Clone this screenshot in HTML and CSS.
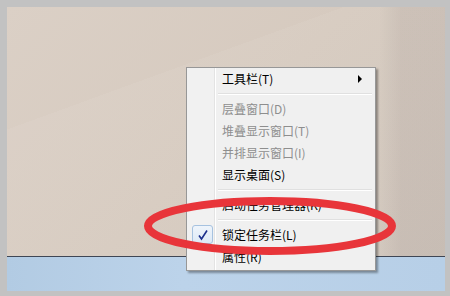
FILE: index.html
```html
<!DOCTYPE html>
<html lang="zh-CN">
<head>
    <meta charset="UTF-8">
    <title>任务栏菜单</title>
    <link rel="stylesheet" href="styles.css">
</head>
<body>
    <div class="frame">
        <div class="screen">
            <div class="desktop"></div>
            <div class="taskbar"></div>

            <!-- menu de contexto da barra -->
            <div class="menu">
                <div class="item"><span class="label">工具栏(T)</span><span class="arrow"></span></div>
                <div class="sep"></div>
                <div class="item off"><span class="label">层叠窗口(D)</span></div>
                <div class="item off"><span class="label">堆叠显示窗口(T)</span></div>
                <div class="item off"><span class="label">并排显示窗口(I)</span></div>
                <div class="item"><span class="label">显示桌面(S)</span></div>
                <div class="sep"></div>
                <div class="item"><span class="label">启动任务管理器(K)</span></div>
                <div class="sep"></div>
                <div class="item">
                    <span class="check">
                        <svg width="12" height="12" viewBox="0 0 12 12"><path d="M2 6.5 L4.5 10 L10 1.5" fill="none" stroke="#1c2f8c" stroke-width="1.6"/></svg>
                    </span>
                    <span class="label">锁定任务栏(L)</span>
                </div>
                <div class="item"><span class="label">属性(R)</span></div>
            </div>

            <svg class="circle" width="438" height="284" viewBox="0 0 438 284">
                <ellipse cx="263" cy="219" rx="122" ry="25" fill="none" stroke="#e8353a" stroke-width="8"/>
            </svg>
        </div>
    </div>
</body>
</html>
```

FILE: styles.css
```css
* {
    margin: 0;
    padding: 0;
    box-sizing: border-box;
}

body {
    width: 450px;
    height: 296px;
    overflow: hidden;
    background-color: #c2c2c2;
    font-family: "Noto Sans CJK SC", "Liberation Sans", sans-serif;
    font-size: 12px;
}

.frame {
    padding: 7px 5px 5px 7px;
    height: 296px;
}

.screen {
    position: relative;
    width: 438px;
    height: 284px;
    display: flex;
    flex-direction: column;
}

.desktop {
    height: 250px;
    background:
        linear-gradient(160deg, transparent 0 30%, rgba(255,255,255,0.05) 30% 100%),
        linear-gradient(to right, transparent 0 85%, rgba(120,110,105,0.12) 90% 100%),
        linear-gradient(135deg, #dbd0c6 0%, #d6cabf 50%, #cfc4ba 100%);
    border-bottom: 1px solid #3f4654;
}

.taskbar {
    flex: 1;
    background: linear-gradient(to right, #b2cbe3, #bcd3ea 40%, #b7cfe7);
}

.menu {
    position: absolute;
    left: 179px;
    top: 60px;
    width: 190px;
    background: linear-gradient(to right, #f1f1f1 0 27px, #e3e3e3 27px 28px, #ffffff 28px 29px, #f0f0f0 29px);
    border: 1px solid #979797;
    box-shadow: 2px 2px 2px rgba(0, 0, 0, 0.35);
    padding: 0 2px 2px 2px;
}

.item {
    position: relative;
    height: 22px;
    display: flex;
    align-items: center;
    padding-left: 33px;
    padding-bottom: 2px;
    color: #000;
}

.item.off {
    color: #8e8e8e;
}

.arrow {
    position: absolute;
    right: 11px;
    top: 7px;
    border-left: 4px solid #000;
    border-top: 4px solid transparent;
    border-bottom: 4px solid transparent;
}

.sep {
    margin: 3px 1px 3px 29px;
    height: 2px;
    border-top: 1px solid #e0e0e0;
    border-bottom: 1px solid #ffffff;
}

.check {
    position: absolute;
    left: 3px;
    top: 1px;
    width: 21px;
    height: 19px;
    border: 1px solid #a6c2e0;
    border-radius: 3px;
    background: linear-gradient(#eef4fb, #dde9f6);
    display: flex;
    align-items: center;
    justify-content: center;
}

.circle {
    position: absolute;
    left: 0;
    top: 0;
}
```
